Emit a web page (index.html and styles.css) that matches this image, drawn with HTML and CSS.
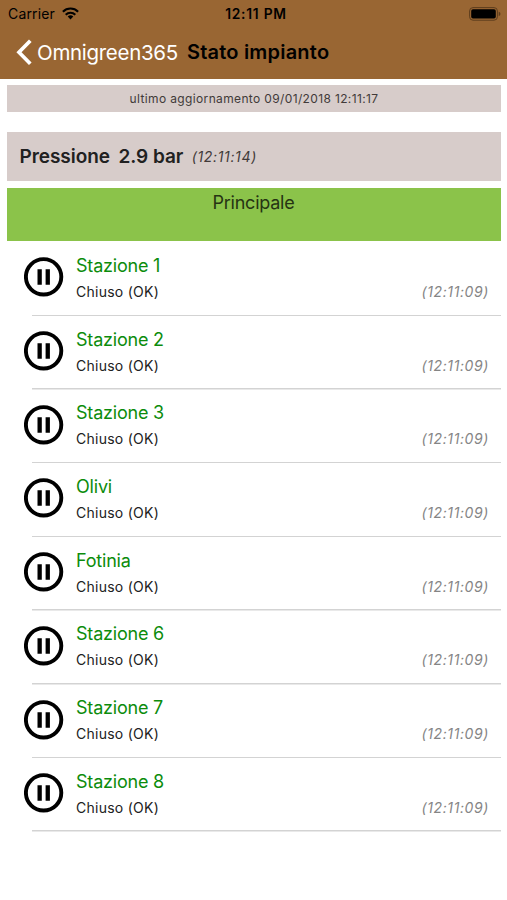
FILE: index.html
```html
<!DOCTYPE html>
<html lang="it">
<head>
<meta charset="utf-8">
<title>Stato impianto</title>
<link rel="stylesheet" href="styles.css">
</head>
<body>
<svg width="0" height="0" class="defs"><defs>
<symbol id="pause" viewBox="0 0 40 40"><circle cx="19.6" cy="19.8" r="17.7" fill="none" stroke="#000" stroke-width="3.9"/><path d="M13.5 12.2h4.3v15.6h-4.3zM21.6 12.2h4.3v15.6h-4.3z"/></symbol>
</defs></svg>
<header class="top">
  <div class="status">
    <div class="carrier"><span>Carrier</span>
      <svg class="wifi" width="17" height="13" viewBox="0 0 17 13"><g fill="none" stroke="#000" stroke-width="2.1"><path d="M.9 4.7a10.7 10.7 0 0 1 15.2 0"/><path d="M3.7 7.7a6.8 6.8 0 0 1 9.6 0"/></g><path d="M8.5 12.4 5.7 9.6a4 4 0 0 1 5.6 0z"/></svg>
    </div>
    <span class="clock">12:11 PM</span>
    <svg class="battery" width="32" height="14" viewBox="0 0 32 14"><rect x=".6" y=".6" width="27.8" height="12.6" rx="3.4" fill="none" stroke="#5d3d1d" stroke-width="1"/><rect x="2.2" y="2.2" width="24.6" height="9.4" rx="1.8"/><path d="M29.7 4.8q1.8.6 1.8 2.2t-1.8 2.2z" fill="#5d3d1d"/></svg>
  </div>
  <nav class="nav">
    <svg class="back-icon" width="17" height="27" viewBox="0 0 17 27"><path d="M15.3 1.8 4 13.3l11.3 11.5" fill="none" stroke="#fff" stroke-width="3.7"/></svg>
    <span class="back">Omnigreen365</span>
    <h1 class="title">Stato impianto</h1>
  </nav>
</header>
<main class="content">
  <div class="updated">ultimo aggiornamento 09/01/2018 12:11:17</div>
  <div class="pressure"><b class="label">Pressione</b><b class="value">2.9 bar</b><i class="when">(12:11:14)</i></div>
  <div class="group">Principale</div>
  <ul class="list">
    <li class="row"><svg class="icon"><use href="#pause"/></svg><div class="name">Stazione 1</div><div class="state">Chiuso (OK)</div><i class="time">(12:11:09)</i></li>
    <li class="row"><svg class="icon"><use href="#pause"/></svg><div class="name">Stazione 2</div><div class="state">Chiuso (OK)</div><i class="time">(12:11:09)</i></li>
    <li class="row"><svg class="icon"><use href="#pause"/></svg><div class="name">Stazione 3</div><div class="state">Chiuso (OK)</div><i class="time">(12:11:09)</i></li>
    <li class="row"><svg class="icon"><use href="#pause"/></svg><div class="name">Olivi</div><div class="state">Chiuso (OK)</div><i class="time">(12:11:09)</i></li>
    <li class="row"><svg class="icon"><use href="#pause"/></svg><div class="name">Fotinia</div><div class="state">Chiuso (OK)</div><i class="time">(12:11:09)</i></li>
    <li class="row"><svg class="icon"><use href="#pause"/></svg><div class="name">Stazione 6</div><div class="state">Chiuso (OK)</div><i class="time">(12:11:09)</i></li>
    <li class="row"><svg class="icon"><use href="#pause"/></svg><div class="name">Stazione 7</div><div class="state">Chiuso (OK)</div><i class="time">(12:11:09)</i></li>
    <li class="row"><svg class="icon"><use href="#pause"/></svg><div class="name">Stazione 8</div><div class="state">Chiuso (OK)</div><i class="time">(12:11:09)</i></li>
  </ul>
</main>
</body>
</html>
```
FILE: styles.css
```css
* { box-sizing: border-box; }
body { margin: 0; background: #fff; color: #212121; font-family: Inter, "Liberation Sans", sans-serif; white-space: nowrap; }
.defs { display: block; }
.top { height: 79px; background: #996633; color: #000; }
.status { display: grid; grid-template-columns: 1fr auto 1fr; align-items: center; height: 27px; padding: 0 6px 0 8px; }
.carrier { display: flex; align-items: center; gap: 7px; font-size: 14px; letter-spacing: .15px; }
.clock { font-size: 13.8px; font-weight: 600; letter-spacing: .75px; padding-left: 3px; }
.battery { justify-self: end; }
.nav { display: flex; align-items: center; height: 50px; padding-left: 15px; }
.back-icon { flex: none; }
.back { margin-left: 5px; width: 150px; color: #fff; font-size: 20.5px; letter-spacing: -.3px; }
.title { margin: 0; font-size: 20px; font-weight: 600; letter-spacing: .2px; }
.content { padding: 6px 6px 0 7px; }
.updated { height: 27px; line-height: 27px; background: #d7ccca; text-align: center; font-size: 12px; letter-spacing: .36px; color: #413a39; }
.pressure { display: flex; align-items: center; height: 49px; margin-top: 20px; padding-left: 12.5px; background: #d7ccca; }
.label, .value { font-size: 19px; font-weight: 600; letter-spacing: -.05px; }
.value { margin-left: 8.5px; }
.when { margin-left: 8.5px; font-size: 14px; letter-spacing: .65px; color: #413a39; }
.group { height: 53px; margin-top: 7px; padding-right: 1px; line-height: 30px; background: #8bc34a; text-align: center; font-size: 18px; letter-spacing: -.24px; color: #263413; }
.list { margin: 0; padding: 1.4px 0 0; list-style: none; }
.row { display: grid; grid-template-columns: 52px 1fr auto; grid-template-rows: 27px 27px; height: 73.7px; margin-left: 17px; padding: 9.5px 12px 0 0; background: linear-gradient(#d3d3d3, #d3d3d3) 7.5px 100% / 100% 1.5px no-repeat; }
.icon { grid-row: 1 / 3; width: 40px; height: 40px; margin-top: 5.5px; }
.name { line-height: 27px; font-size: 18px; letter-spacing: -.2px; color: #0c8c0c; }
.state { grid-column: 2; line-height: 26px; font-size: 14px; letter-spacing: .26px; }
.time { grid-column: 3; grid-row: 2; line-height: 26px; font-size: 14px; letter-spacing: .6px; color: #858585; }
```
